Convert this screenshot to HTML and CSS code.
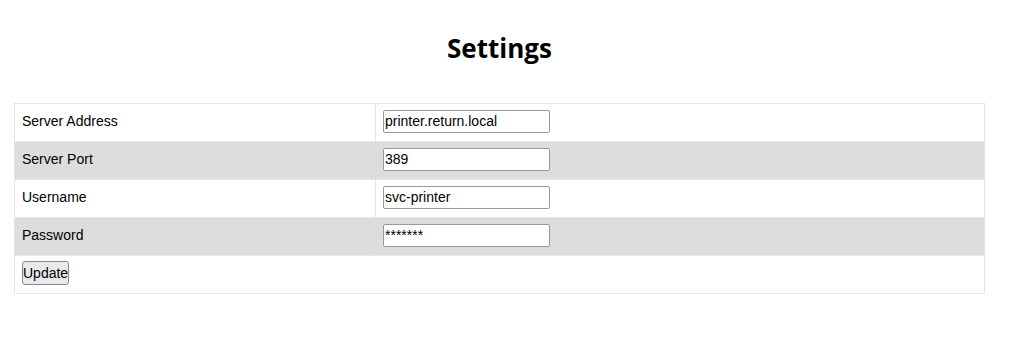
FILE: index.html
```html
<!DOCTYPE html>
<html>
<head>
  <title>Settings</title>
  <link rel="stylesheet" href="styles.css">
</head>
<body>
  <main class="pagina">
    <h1 class="titulo">Settings</h1>

    <form onsubmit="event.preventDefault()">
      <table class="config">
        <tr>
          <td class="rotulo">Server Address</td>
          <td><input type="text" name="endereco" value="printer.return.local"></td>
        </tr>
        <tr class="listra">
          <td class="rotulo">Server Port</td>
          <td><input type="text" name="porta" value="389"></td>
        </tr>
        <tr>
          <td class="rotulo">Username</td>
          <td><input type="text" name="usuario" value="svc-printer"></td>
        </tr>
        <tr class="listra">
          <td class="rotulo">Password</td>
          <td><input type="text" name="senha" value="*******"></td>
        </tr>
        <tr>
          <td colspan="2"><input type="submit" class="botao" value="Update"></td>
        </tr>
      </table>
    </form>
  </main>
</body>
</html>
```

FILE: styles.css
```css
body {
  margin: 0;
  background-color: #fff;
  font-family: "Liberation Sans", Arial, sans-serif;
  color: #000;
}

.pagina {
  width: 971px;
  margin-left: 14px;
  padding-top: 33px;
}

.titulo {
  margin: 0 0 40px 0;
  text-align: center;
  font-family: "Open Sans", sans-serif;
  font-size: 26px;
  font-weight: bold;
  line-height: 30px;
}

form {
  margin: 0;
}

.config {
  width: 100%;
  border-collapse: collapse;
  border: 1px solid #e6e6e6;
  font-size: 14px;
}

.config td {
  height: 34px;
  padding: 0 7px 3px 7px;
  border-top: 1px solid #e6e6e6;
}

.config td.rotulo {
  width: 346px;
  border-right: 1px solid #e6e6e6;
}

.listra td {
  background-color: #dddddd;
}

.listra td.rotulo {
  border-right-color: #dddddd;
}

input[type="text"] {
  width: 163px;
  height: 19px;
  padding: 1px 1px;
  border: 1px solid #999;
  border-radius: 2px;
  font-family: "Liberation Sans", Arial, sans-serif;
  font-size: 14px;
  background-color: #fff;
}

.botao {
  font-family: "Liberation Sans", Arial, sans-serif;
  font-size: 14px;
  padding: 3px 0;
  border: 1px solid #888;
  border-radius: 3px;
  background-color: #e9e9ed;
}
```
